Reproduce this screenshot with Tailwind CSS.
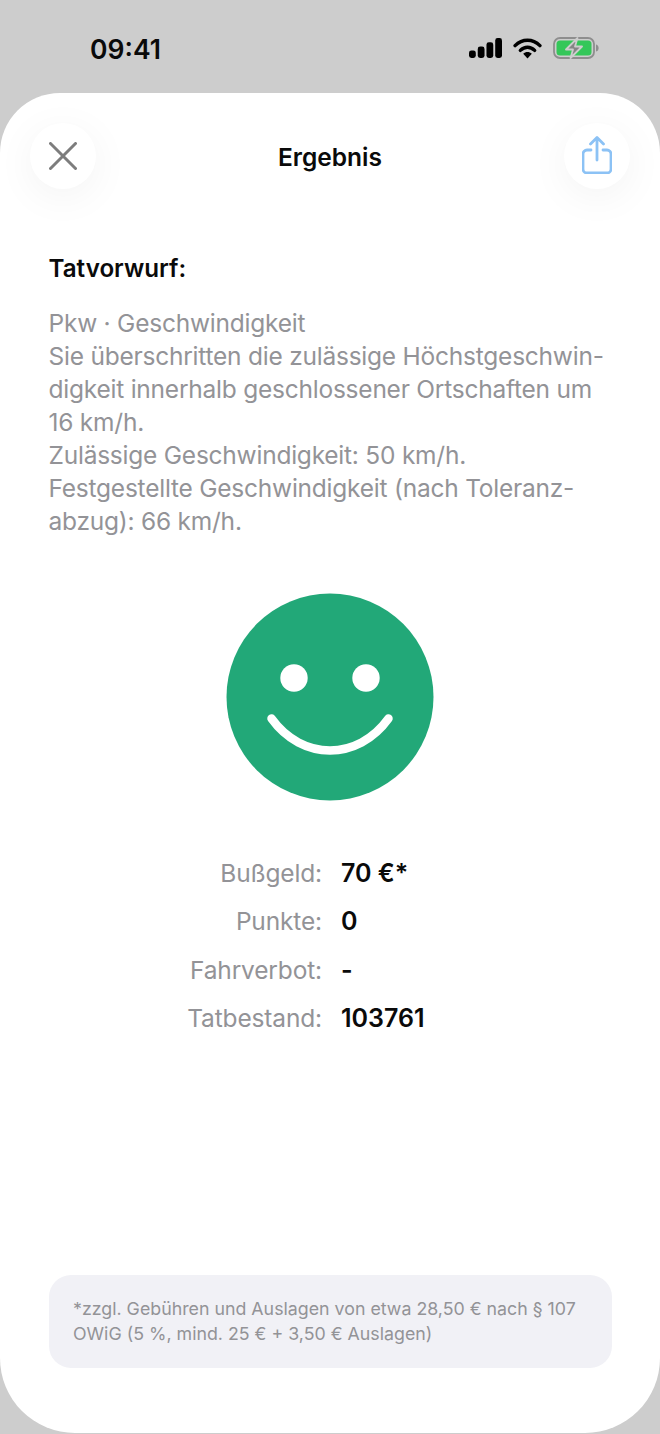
<!DOCTYPE html>
<html lang="de">
<head>
  <meta charset="UTF-8" />
  <meta name="viewport" content="width=device-width, initial-scale=1" />
  <title>Ergebnis</title>
  <script src="https://cdn.jsdelivr.net/npm/@tailwindcss/browser@4"></script>
</head>
<body class="bg-[#cdcdcd] font-['Inter','Noto_Sans',sans-serif] h-[1434px] w-[660px] overflow-hidden">
  <!-- Statusleiste -->
  <div class="h-[93px] flex justify-between pt-[33px] pl-[90px] pr-[61px]">
    <span class="text-[26.5px] leading-[32px] font-semibold text-[#0a0a0a]">09:41</span>
    <div class="flex items-start gap-[11px] pt-[4px]">
      <svg width="33" height="20" viewBox="0 0 34 21" preserveAspectRatio="none" class="mt-[1px]">
        <rect x="0" y="13" width="7" height="8" rx="2.5" fill="#000" />
        <rect x="9" y="9" width="7" height="12" rx="2.5" fill="#000" />
        <rect x="18" y="4.5" width="7" height="16.5" rx="2.5" fill="#000" />
        <rect x="27" y="0" width="7" height="21" rx="2.5" fill="#000" />
      </svg>
      <svg width="29" height="21" viewBox="0 0 30 22" class="mt-[1px]">
        <path d="M2 8 C9.5 0.5 20.5 0.5 28 8" fill="none" stroke="#000" stroke-width="3.6" stroke-linecap="round" />
        <path d="M7.5 13 C12 8.5 18 8.5 22.5 13" fill="none" stroke="#000" stroke-width="3.6" stroke-linecap="round" />
        <path d="M10.5 16.5 C13 14 17 14 19.5 16.5 L15 21.5 Z" fill="#000" />
      </svg>
      <svg width="46" height="22" viewBox="0 0 46 22">
        <rect x="1" y="1" width="40" height="20" rx="6" fill="none" stroke="#8e8e8e" stroke-width="1.8" />
        <rect x="3.5" y="3.5" width="35" height="15" rx="3.5" fill="#34c759" />
        <path d="M43 7.5 C45 8 45.6 9.5 45.6 11 C45.6 12.5 45 14 43 14.5 Z" fill="#8e8e8e" />
        <path d="M24.5 1 L13 12.5 L20 12.5 L17.5 21 L29 9.5 L22 9.5 Z" fill="#858585" stroke="#cdcdcd" stroke-width="1.8" stroke-linejoin="round" />
      </svg>
    </div>
  </div>

  <!-- Sheet -->
  <main class="relative bg-white h-[1340px] rounded-t-[60px] rounded-b-[75px] flex flex-col overflow-hidden">
    <header class="relative h-[128px] flex items-start justify-between px-[30px] pt-[30px]">
      <button class="w-[66px] h-[66px] rounded-full bg-white flex items-center justify-center shadow-[0_8px_40px_rgba(0,0,0,0.05)]">
        <svg width="28" height="28" viewBox="0 0 28 28">
          <path d="M1.5 1.5 L26.5 26.5 M26.5 1.5 L1.5 26.5" stroke="#7d7d7d" stroke-width="3" stroke-linecap="round" />
        </svg>
      </button>
      <h1 class="text-[24.5px] leading-[30px] font-semibold text-[#0a0a0a] pt-[19px]">Ergebnis</h1>
      <button class="w-[66px] h-[66px] rounded-full bg-white flex items-center justify-center shadow-[0_8px_40px_rgba(0,0,0,0.05)]">
        <svg width="30" height="38" viewBox="0 0 30 38" class="mt-[-2px]">
          <path d="M9 14 H5 a4 4 0 0 0 -4 4 V33 a4 4 0 0 0 4 4 H25 a4 4 0 0 0 4 -4 V18 a4 4 0 0 0 -4 -4 H21" fill="none" stroke="#8cc2f5" stroke-width="2.8" stroke-linecap="round" />
          <path d="M15 24 V2 M8.5 8 L15 1.5 L21.5 8" fill="none" stroke="#8cc2f5" stroke-width="2.8" stroke-linecap="round" stroke-linejoin="round" />
        </svg>
      </button>
    </header>

    <section class="px-[48.5px]">
      <h2 class="text-[24.2px] leading-[33px] font-semibold text-[#0a0a0a] mt-[31px]">Tatvorwurf:</h2>
      <p class="text-[24.5px] leading-[33px] text-[#939397] mt-[22px] whitespace-nowrap tracking-[-0.23px]">
        Pkw · Geschwindigkeit<br />
        Sie überschritten die zulässige Höchstgeschwin-<br />
        digkeit innerhalb geschlossener Ortschaften um<br />
        16 km/h.<br />
        Zulässige Geschwindigkeit: 50 km/h.<br />
        Festgestellte Geschwindigkeit (nach Toleranz-<br />
        abzug): 66 km/h.
      </p>
    </section>

    <div class="flex justify-center mt-[55px]">
      <svg width="208" height="208" viewBox="0 0 208 208">
        <circle cx="104" cy="104" r="103.5" fill="#22a878" />
        <circle cx="68" cy="85" r="13.7" fill="#fff" />
        <circle cx="140" cy="85" r="13.7" fill="#fff" />
        <path d="M45.5 125.5 C76 168 132 168 162.5 125.5" fill="none" stroke="#fff" stroke-width="8.5" stroke-linecap="round" />
      </svg>
    </div>

    <dl class="grid grid-cols-[322px_1fr] gap-x-[19px] gap-y-[15px] mt-[56px] text-[24.5px] leading-[33.3px]">
      <dt class="text-right text-[#939397] tracking-[-0.15px]">Bußgeld:</dt>
      <dd class="font-semibold text-[#0a0a0a] text-[25px]">70 €*</dd>
      <dt class="text-right text-[#939397] tracking-[-0.15px]">Punkte:</dt>
      <dd class="font-semibold text-[#0a0a0a] text-[25px]">0</dd>
      <dt class="text-right text-[#939397] tracking-[-0.15px]">Fahrverbot:</dt>
      <dd class="font-semibold text-[#0a0a0a] text-[25px]">-</dd>
      <dt class="text-right text-[#939397] tracking-[-0.15px]">Tatbestand:</dt>
      <dd class="font-semibold text-[#0a0a0a] text-[25px]">103761</dd>
    </dl>

    <footer class="mt-auto mx-[48.5px] mb-[65px] h-[93px] rounded-[22px] bg-[#f1f1f6] px-[24.5px] pt-[22px] text-[17.8px] leading-[24.5px] text-[#939397] whitespace-nowrap">
      *zzgl. Gebühren und Auslagen von etwa 28,50 € nach § 107<br />
      OWiG (5 %, mind. 25 € + 3,50 € Auslagen)
    </footer>
  </main>
</body>
</html>
